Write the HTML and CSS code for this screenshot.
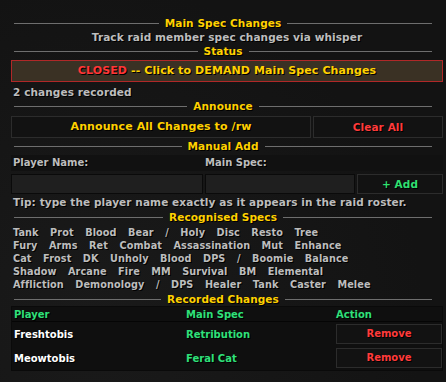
FILE: index.html
```html
<!DOCTYPE html>
<html lang="en">
<head>
<meta charset="UTF-8">
<title>Main Spec Changes</title>
<link rel="stylesheet" href="styles.css">
</head>
<body>

<div class="frame">

  <!-- タイトル -->
  <div class="section-head first"><span class="rule"></span><span class="head-text">Main Spec Changes</span><span class="rule"></span></div>
  <div class="subtitle">Track raid member spec changes via whisper</div>

  <!-- ステータス -->
  <div class="section-head"><span class="rule"></span><span class="head-text">Status</span><span class="rule"></span></div>
  <div class="status-button"><span class="closed">CLOSED</span>&nbsp;-- Click to DEMAND Main Spec Changes</div>
  <div class="count">2 changes recorded</div>

  <!-- アナウンス -->
  <div class="section-head"><span class="rule"></span><span class="head-text">Announce</span><span class="rule"></span></div>
  <div class="button-row">
    <div class="btn btn-announce">Announce All Changes to /rw</div>
    <div class="btn btn-clear">Clear All</div>
  </div>

  <!-- 手動追加 -->
  <div class="section-head manual"><span class="rule"></span><span class="head-text">Manual Add</span><span class="rule"></span></div>
  <div class="label-row">
    <div class="label-name">Player Name:</div>
    <div class="label-spec">Main Spec:</div>
  </div>
  <div class="input-row">
    <div class="input input-name"></div>
    <div class="input input-spec"></div>
    <div class="btn btn-add">+ Add</div>
  </div>
  <div class="tip">Tip: type the player name exactly as it appears in the raid roster.</div>

  <!-- 認識されるスペック -->
  <div class="section-head"><span class="rule"></span><span class="head-text">Recognised Specs</span><span class="rule"></span></div>
  <div class="specs">
    <div>Tank Prot Blood Bear / Holy Disc Resto Tree</div>
    <div>Fury Arms Ret Combat Assassination Mut Enhance</div>
    <div>Cat Frost DK Unholy Blood DPS / Boomie Balance</div>
    <div>Shadow Arcane Fire MM Survival BM Elemental</div>
    <div>Affliction Demonology / DPS Healer Tank Caster Melee</div>
  </div>

  <!-- 記録 -->
  <div class="section-head"><span class="rule"></span><span class="head-text">Recorded Changes</span><span class="rule"></span></div>
  <div class="table">
    <div class="row row-head">
      <div class="col-player">Player</div>
      <div class="col-spec">Main Spec</div>
      <div class="col-action">Action</div>
    </div>
    <div class="row">
      <div class="col-player name">Freshtobis</div>
      <div class="col-spec spec">Retribution</div>
      <div class="col-action"><div class="btn btn-remove">Remove</div></div>
    </div>
    <div class="row">
      <div class="col-player name">Meowtobis</div>
      <div class="col-spec spec">Feral Cat</div>
      <div class="col-action"><div class="btn btn-remove">Remove</div></div>
    </div>
  </div>

</div>

</body>
</html>
```

FILE: styles.css
```css
body {
  margin: 0;
  background-color: #151515;
  font-family: "DejaVu Sans", sans-serif;
  font-size: 10.5px;
  letter-spacing: 0.1px;
  font-weight: bold;
  color: #bdbdbd;
  text-shadow: 1px 1px 0 #000;
}

.frame {
  width: 432px;
  height: 382px;
  padding: 16px 3px 0 11px;
  background: radial-gradient(circle at 20% 80%, #1a1a1a 0, #131313 70%);
}

/* 見出し */
.section-head {
  display: flex;
  align-items: center;
  height: 14px;
  padding: 0 11px 0 3px;
}

.rule {
  flex: 1;
  height: 1px;
  background-color: #6e6e6e;
}

.head-text {
  color: #ffd100;
  padding: 0 6px;
}

.subtitle {
  height: 14px;
  line-height: 14px;
  text-align: center;
}

.status-button {
  height: 20px;
  line-height: 20px;
  margin-top: 2px;
  text-align: center;
  font-size: 11px;
  letter-spacing: 0.1px;
  color: #ffd100;
  background-color: #3a3124;
  border: 1px solid #b02828;
}

.closed {
  color: #ff3636;
}

.count {
  height: 14px;
  line-height: 14px;
  margin-top: 3px;
  padding-left: 2px;
}

/* ボタン */
.btn {
  background-color: #121212;
  border: 1px solid #2c2c2c;
  text-align: center;
  box-sizing: border-box;
}

.button-row {
  display: flex;
  gap: 2px;
  margin-top: 3px;
}

.btn-announce {
  width: 300px;
  height: 22px;
  line-height: 20px;
  font-size: 11px;
  letter-spacing: 0.1px;
  color: #ffd100;
}

.btn-clear {
  flex: 1;
  height: 22px;
  line-height: 20px;
  color: #ff3b3b;
}

.manual {
  margin-top: 1px;
}

.label-row {
  display: flex;
  height: 16px;
  line-height: 16px;
  margin-top: 2px;
  font-size: 10px;
  letter-spacing: 0;
  background-color: #111;
}

.label-name {
  width: 192px;
  padding-left: 2px;
}

.input-row {
  display: flex;
  gap: 2px;
  margin-top: 3px;
}

.input {
  height: 20px;
  background-color: #1f1f1f;
  border: 1px solid #0a0a0a;
  box-sizing: border-box;
}

.input-name {
  width: 192px;
}

.input-spec {
  width: 150px;
}

.btn-add {
  flex: 1;
  height: 20px;
  line-height: 18px;
  color: #2fe071;
}

.tip {
  height: 15px;
  line-height: 15px;
  margin-top: 1px;
  padding-left: 2px;
}

.specs {
  padding-left: 2px;
  font-size: 9.7px;
  letter-spacing: 0.1px;
  line-height: 13px;
  word-spacing: 8px;
  margin-top: 2px;
}

.specs + .section-head {
  margin-top: 1px;
}

/* テーブル */
.table {
  border: 1px solid #0a0a0a;
  background-color: #0f0f0f;
  font-size: 10px;
  letter-spacing: 0;
}

.row {
  display: flex;
  align-items: center;
  height: 24px;
}

.row-head {
  height: 14px;
  border-bottom: 1px solid #050505;
  color: #2fe07a;
}

.col-player {
  width: 172px;
  padding-left: 2px;
}

.col-spec {
  width: 150px;
}

.col-action {
  flex: 1;
}

.name {
  color: #fff;
}

.spec {
  color: #2fe07a;
}

.btn-remove {
  height: 20px;
  line-height: 18px;
  color: #ff3b3b;
}
```
